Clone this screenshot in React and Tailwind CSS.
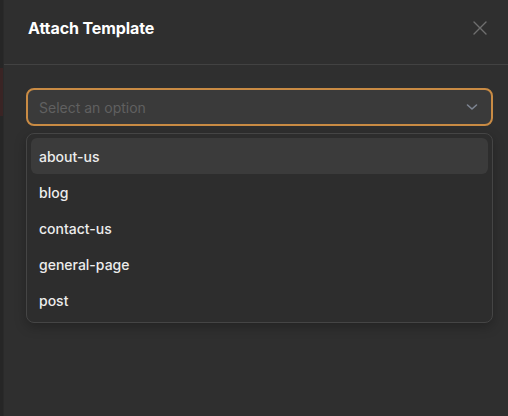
import React from 'react';

const options = ['about-us', 'blog', 'contact-us', 'general-page', 'post'];

export default function App() {
  return (
    <div className="flex h-[416px] w-[508px] overflow-hidden bg-[#262626]" style={{ fontFamily: 'Inter, "Noto Sans", sans-serif' }}>
      <div className="flex w-[3px] shrink-0 flex-col">
        <div className="h-[68px]" />
        <div className="h-[48px] bg-[#3a2424]" />
        <div className="flex-1" />
      </div>
      <div className="flex flex-1 flex-col bg-[#2f2f2f] border-l border-[#2a2a2a]">
        <div className="flex h-[64px] items-start justify-between pl-[24px] pr-[20px] pt-[18px]">
          <h2 className="text-[16px] leading-[20px] font-bold tracking-[-0.1px] text-white">Attach Template</h2>
          <button className="mt-[2px] text-[#6f6f6f]">
            <svg width="16" height="16" viewBox="0 0 16 16" fill="none" stroke="currentColor" strokeWidth="1.4" strokeLinecap="round">
              <path d="M2 2l12 12M14 2L2 14" />
            </svg>
          </button>
        </div>
        <div className="h-px bg-[#424242]" />
        <div className="pl-[22px] pr-[15px] pt-[23px]">
          <div className="flex h-[38px] items-center justify-between rounded-[8px] border-2 border-[#c98b44] bg-[#3a3a3a] pl-[11px] pr-[12px]">
            <span className="text-[14px] text-[#606060]">Select an option</span>
            <svg width="14" height="14" viewBox="0 0 14 14" fill="none" stroke="#7e8592" strokeWidth="1.6" strokeLinecap="round" strokeLinejoin="round">
              <path d="M2.5 5L7 9l4.5-4" />
            </svg>
          </div>
          <div className="mt-[7px] flex flex-col rounded-[8px] border border-[#454545] bg-[#2d2d2d] p-[4px] shadow-[0_4px_12px_rgba(0,0,0,0.25)]">
            {options.map((o, i) => (
              <div
                key={o}
                className={`flex h-[36px] items-center rounded-[6px] px-[8px] text-[14px] font-medium text-[#ececec] ${i === 0 ? 'bg-[#3b3b3b]' : ''}`}
              >
                {o}
              </div>
            ))}
          </div>
        </div>
      </div>
    </div>
  );
}
